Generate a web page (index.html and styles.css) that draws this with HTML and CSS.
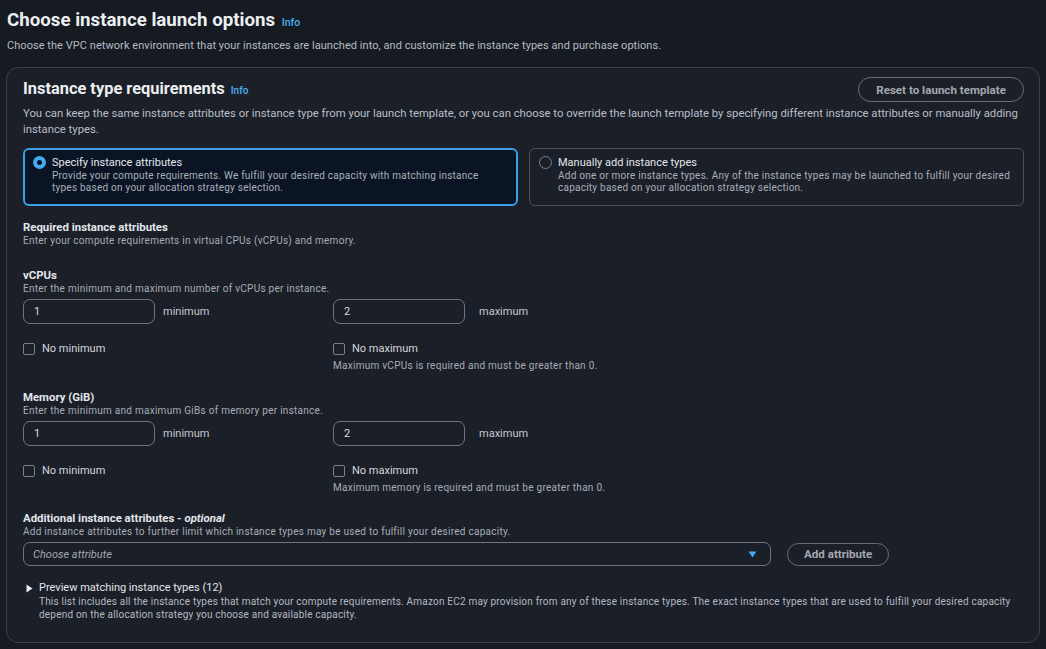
FILE: index.html
```html
<!DOCTYPE html>
<html lang="en">
<head>
<meta charset="utf-8">
<title>Choose instance launch options</title>
<link rel="stylesheet" href="styles.css">
</head>
<body>
<div class="page">
  <header class="page-head">
    <h1 class="title">Choose instance launch options <a class="info info-lg">Info</a></h1>
    <p class="page-desc">Choose the VPC network environment that your instances are launched into, and customize the instance types and purchase options.</p>
  </header>

  <section class="panel">
    <div class="panel-head">
      <h2 class="panel-title">Instance type requirements <a class="info">Info</a></h2>
      <button class="btn">Reset to launch template</button>
    </div>
    <p class="panel-desc">You can keep the same instance attributes or instance type from your launch template, or you can choose to override the launch template by specifying different instance attributes or manually adding instance types.</p>

    <div class="tiles">
      <div class="tile tile-selected">
        <span class="radio radio-on"></span>
        <div class="tile-text">
          <div class="tile-title">Specify instance attributes</div>
          <div class="tile-desc">Provide your compute requirements. We fulfill your desired capacity with matching instance types based on your allocation strategy selection.</div>
        </div>
      </div>
      <div class="tile">
        <span class="radio"></span>
        <div class="tile-text">
          <div class="tile-title">Manually add instance types</div>
          <div class="tile-desc">Add one or more instance types. Any of the instance types may be launched to fulfill your desired capacity based on your allocation strategy selection.</div>
        </div>
      </div>
    </div>

    <div class="group">
      <h3 class="label">Required instance attributes</h3>
      <p class="sub">Enter your compute requirements in virtual CPUs (vCPUs) and memory.</p>
    </div>

    <div class="field field-first">
      <h4 class="label">vCPUs</h4>
      <p class="sub">Enter the minimum and maximum number of vCPUs per instance.</p>
      <div class="range">
        <div class="col">
          <div class="input-row"><div class="input">1</div><span class="unit">minimum</span></div>
          <label class="check"><span class="cb"></span>No minimum</label>
        </div>
        <div class="col">
          <div class="input-row input-row-max"><div class="input">2</div><span class="unit">maximum</span></div>
          <label class="check"><span class="cb"></span>No maximum</label>
          <p class="hint">Maximum vCPUs is required and must be greater than 0.</p>
        </div>
      </div>
    </div>

    <div class="field">
      <h4 class="label">Memory (GiB)</h4>
      <p class="sub">Enter the minimum and maximum GiBs of memory per instance.</p>
      <div class="range">
        <div class="col">
          <div class="input-row"><div class="input">1</div><span class="unit">minimum</span></div>
          <label class="check"><span class="cb"></span>No minimum</label>
        </div>
        <div class="col">
          <div class="input-row input-row-max"><div class="input">2</div><span class="unit">maximum</span></div>
          <label class="check"><span class="cb"></span>No maximum</label>
          <p class="hint">Maximum memory is required and must be greater than 0.</p>
        </div>
      </div>
    </div>

    <div class="field field-extra">
      <h4 class="label">Additional instance attributes - <i>optional</i></h4>
      <p class="sub">Add instance attributes to further limit which instance types may be used to fulfill your desired capacity.</p>
      <div class="attr-row">
        <div class="select">
          <span class="placeholder">Choose attribute</span>
          <svg class="caret" width="9" height="7" viewBox="0 0 9 7"><path d="M0.5 0.5h8L4.5 6.5z" fill="#42a9f2"/></svg>
        </div>
        <button class="btn btn-add">Add attribute</button>
      </div>
    </div>

    <div class="preview">
      <div class="preview-head">
        <svg class="tri" width="7" height="9" viewBox="0 0 7 9"><path d="M0.5 0.5L6.5 4.5L0.5 8.5z" fill="#e9ebed"/></svg>
        <span>Preview matching instance types (12)</span>
      </div>
      <p class="preview-desc">This list includes all the instance types that match your compute requirements. Amazon EC2 may provision from any of these instance types. The exact instance types that are used to fulfill your desired capacity depend on the allocation strategy you choose and available capacity.</p>
    </div>
  </section>
</div>
</body>
</html>
```

FILE: styles.css
```css
* { box-sizing: border-box; }
html, body { margin: 0; padding: 0; }
body {
  background: #161a21;
  color: #d1d5db;
  font-family: Roboto, "Liberation Sans", sans-serif;
  width: 1046px;
  height: 649px;
  overflow: hidden;
}
.page { padding: 8px 6px 0 6px; }
.title {
  margin: 0 0 0 1px;
  font-size: 18.7px;
  line-height: 24px;
  font-weight: 700;
  color: #eceef1;
}
.info {
  color: #4bb1f3;
  font-weight: 500;
  font-size: 10px;
  margin-left: 2px;
}
.info-lg { font-size: 10.5px; }
.page-desc {
  margin: 3px 0 0 1px;
  font-size: 11px;
  line-height: 16px;
  color: #b4bac3;
  letter-spacing: 0.05px;
}
.panel {
  margin-top: 13px;
  background: #1b1f28;
  border: 1px solid #3b404a;
  border-radius: 12px;
  height: 576px;
  padding: 8px 15px 0 16px;
}
.panel-head {
  display: flex;
  align-items: center;
  justify-content: space-between;
}
.panel-title {
  margin: 0;
  font-size: 16.4px;
  line-height: 24px;
  font-weight: 700;
  color: #eceef1;
  padding-top: 1px;
}
.btn {
  font-family: inherit;
  background: transparent;
  border: 1px solid #676c75;
  border-radius: 14px;
  color: #a3a8b0;
  font-weight: 700;
  font-size: 11.6px;
  height: 25px;
  padding: 0 17px;
}
.panel-desc {
  margin: 3px 0 0 0;
  font-size: 11.3px;
  line-height: 16px;
  color: #b9bfc8;
}
.tiles {
  margin-top: 10px;
  display: grid;
  grid-template-columns: 1fr 1fr;
  gap: 11px;
}
.tile {
  display: flex;
  align-items: flex-start;
  gap: 6px;
  height: 58px;
  border: 1px solid #4a4f59;
  border-radius: 6px;
  padding: 7px 10px 0 9px;
}
.tile-selected {
  border: 2px solid #3d9fe6;
  background: #0b1424;
  padding: 6px 10px 0 8px;
}
.radio {
  flex: none;
  width: 13px;
  height: 13px;
  border-radius: 50%;
  border: 1px solid #7b808a;
}
.radio-on {
  border: 4px solid #42a9f2;
  background: #0b1424;
}
.tile-title {
  font-size: 11px;
  line-height: 14px;
  color: #e3e6ea;
}
.tile-desc {
  font-size: 10px;
  line-height: 12px;
  letter-spacing: 0.24px;
  color: #aab0b9;
}
.group { margin-top: 13px; }
.label {
  margin: 0;
  font-size: 11.4px;
  line-height: 16px;
  font-weight: 700;
  color: #e3e6ea;
}
.label i { font-weight: 700; }
.sub {
  margin: 0;
  font-size: 10px;
  line-height: 12px;
  letter-spacing: 0.27px;
  color: #a7adb6;
}
.field { margin-top: 17px; }
.field-first { margin-top: 20px; }
.field-extra { margin-top: 16px; }
.range {
  margin-top: 4px;
  display: grid;
  grid-template-columns: 310px 1fr;
}
.input-row {
  display: flex;
  align-items: center;
  gap: 8px;
}
.input-row-max { gap: 14px; }
.input {
  width: 132px;
  height: 25px;
  border: 1px solid #6f747d;
  border-radius: 7px;
  padding: 0 10px;
  display: flex;
  align-items: center;
  font-size: 11px;
  color: #d6dadf;
}
.unit { font-size: 11px; color: #c4c9d0; }
.check {
  margin-top: 17px;
  display: flex;
  align-items: center;
  gap: 7px;
  font-size: 11px;
  line-height: 16px;
  color: #d3d7dc;
}
.cb {
  width: 12px;
  height: 12px;
  border: 1px solid #7b808a;
  border-radius: 2px;
}
.hint {
  margin: 3px 0 0 0;
  font-size: 10px;
  line-height: 12px;
  letter-spacing: 0.27px;
  color: #a7adb6;
}
.attr-row {
  margin-top: 4px;
  display: flex;
  align-items: center;
  gap: 16px;
}
.select {
  width: 748px;
  height: 24px;
  border: 1px solid #6f747d;
  border-radius: 7px;
  display: flex;
  align-items: center;
  justify-content: space-between;
  padding: 0 13px 0 9px;
}
.placeholder {
  font-style: italic;
  font-size: 11px;
  color: #a3a8b0;
}
.btn-add { height: 23px; padding: 0 16px; }
.preview { margin-top: 15px; }
.preview-head {
  display: flex;
  align-items: center;
  gap: 6px;
  padding-left: 3px;
  font-size: 11px;
  line-height: 14px;
  color: #e3e6ea;
}
.preview-desc {
  margin: 0 0 0 16px;
  font-size: 10px;
  line-height: 13px;
  letter-spacing: 0.2px;
  color: #b4bac3;
}
```
